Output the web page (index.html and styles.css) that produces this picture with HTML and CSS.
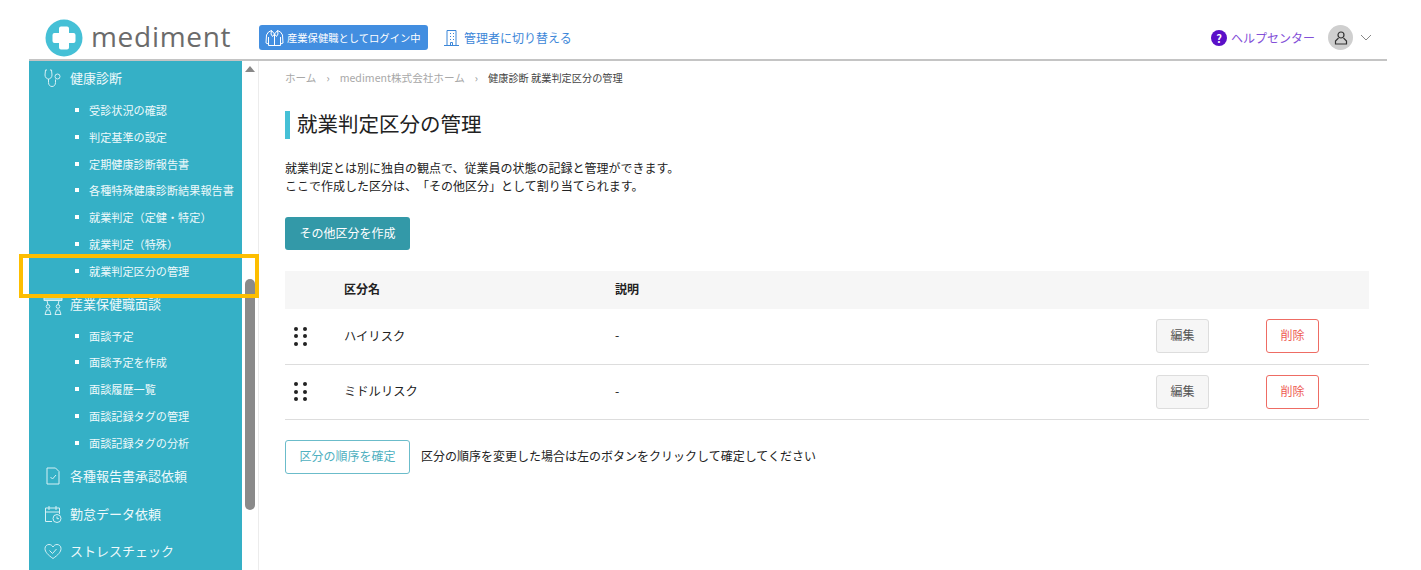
FILE: index.html
```html
<!DOCTYPE html>
<html lang="ja">
<head>
<meta charset="utf-8">
<title>就業判定区分の管理</title>
<link rel="stylesheet" href="styles.css">
</head>
<body>
<div class="app">
  <header class="topbar">
    <div class="logo">
      <svg class="logo-mark" width="38" height="38" viewBox="0 0 38 38"><circle cx="19" cy="19" r="18.5" fill="#45c0d6"/><path d="M16 7.500h6a2 2 0 0 1 2 2V14h4.500a2 2 0 0 1 2 2v6a2 2 0 0 1-2 2H24v4.500a2 2 0 0 1-2 2h-6a2 2 0 0 1-2-2V24H9.500a2 2 0 0 1-2-2v-6a2 2 0 0 1 2-2H14V9.500a2 2 0 0 1 2-2z" fill="#fff"/></svg>
      <span class="logo-text">mediment</span>
    </div>
    <div class="role-badge">
      <svg width="19" height="18" viewBox="0 0 19 18" fill="none" stroke="#fff" stroke-width="1"><path d="M6.500 1.500 3.500 3 1.500 6 1 14l2.500 1M12.500 1.500l3 1.500 2 3 .5 8-2.500 1M3.500 8v8.500h12V8M6.500 1.500l3 3.500 3-3.500M6.500 1.500 6 5l1.500 2.500L9.500 5l2 2.500L13 5l-.5-3.500M9.500 5v11.500"/></svg>
      <span>産業保健職としてログイン中</span>
    </div>
    <a class="switch-link">
      <svg width="15" height="18" viewBox="0 0 15 18" fill="none" stroke="#3b86d8" stroke-width="1"><path d="M3 1.500h9v15H3zM0 16.500h15M6 4.500h1M9 4.500h1M6 7.500h1M9 7.500h1M6 10.500h1M9 10.500h1M6.500 13.500h2v3h-2z"/></svg>
      <span>管理者に切り替える</span>
    </a>
    <div class="top-right">
      <a class="help"><span class="help-icon">?</span><span>ヘルプセンター</span></a>
      <span class="avatar">
        <svg width="14" height="14" viewBox="0 0 14 14" fill="none" stroke="#333" stroke-width="1.200"><circle cx="7" cy="4" r="3"/><path d="M4.500 7 1.500 10v3h11v-3l-3-3"/></svg>
      </span>
      <svg class="chev" width="12" height="7" viewBox="0 0 12 7" fill="none" stroke="#888" stroke-width="1"><path d="M1 1l5 5 5-5"/></svg>
    </div>
  </header>

  <div class="body-row">
    <nav class="sidebar">
      <div class="nav-head first">
        <svg width="20" height="20" viewBox="0 0 20 20" fill="none" stroke="#d6f0f5" stroke-width="1"><path d="M4 2H2.500L2 7c0 2.500 2 4 3.500 4S9 9.500 9 7L8.500 2H7M5.500 11v3.500c0 2.500 1.500 4 3.500 4s3.500-1.500 3.500-4v-3"/><circle cx="14.500" cy="8.500" r="2.500"/></svg>
        <span>健康診断</span>
      </div>
      <ul class="nav-list">
        <li>受診状況の確認</li>
        <li>判定基準の設定</li>
        <li>定期健康診断報告書</li>
        <li>各種特殊健康診断結果報告書</li>
        <li>就業判定（定健・特定）</li>
        <li>就業判定（特殊）</li>
        <li>就業判定区分の管理</li>
      </ul>
      <div class="nav-head second">
        <svg class="icon-desk" width="20" height="20" viewBox="0 0 20 20" fill="none" stroke="#d6f0f5" stroke-width="1"><path d="M1 1.500h18v3H1zM4 4.500 5 9M16 4.500 15 9" fill="#9bdbe6" stroke="#d6f0f5"/><circle cx="5" cy="10.500" r="1.800"/><circle cx="15" cy="10.500" r="1.800"/><path d="M2 18.500 3.500 14h3L8 18.500zM12 18.500 13.500 14h3l1.500 4.500z"/></svg>
        <span>産業保健職面談</span>
      </div>
      <ul class="nav-list">
        <li>面談予定</li>
        <li>面談予定を作成</li>
        <li>面談履歴一覧</li>
        <li>面談記録タグの管理</li>
        <li>面談記録タグの分析</li>
      </ul>
      <div class="nav-head third">
        <svg width="20" height="20" viewBox="0 0 20 20" fill="none" stroke="#d6f0f5" stroke-width="1"><path d="M4 2h8.500L16 5.500V18H4zM7.500 11l2 2 3.500-4"/></svg>
        <span>各種報告書承認依頼</span>
      </div>
      <div class="nav-head fourth">
        <svg width="20" height="20" viewBox="0 0 20 20" fill="none" stroke="#d6f0f5" stroke-width="1"><path d="M9 17.500H2.500V4h14v6M2.500 8h14M6 2v4M13 2v4"/><circle cx="14" cy="14.500" r="4"/><path d="M14 12.500v2.200h2"/></svg>
        <span>勤怠データ依頼</span>
      </div>
      <div class="nav-head fifth">
        <svg width="20" height="20" viewBox="0 0 20 20" fill="none" stroke="#d6f0f5" stroke-width="1"><path d="M10 17.500C5 14 2 11 2 7.500 2 5 4 3.500 6 3.500c1.800 0 3.200 1 4 2.500.8-1.500 2.200-2.500 4-2.500 2 0 4 1.500 4 4 0 3.500-3 6.500-8 10zM6.500 9.500l3 3 4-4.500"/></svg>
        <span>ストレスチェック</span>
      </div>
    </nav>
    <div class="scrollbar">
      <span class="scroll-arrow"></span>
      <span class="scroll-thumb"></span>
    </div>

    <main class="content">
      <div class="crumbs">
        <span>ホーム</span><i>›</i><span>mediment株式会社ホーム</span><i>›</i><span class="current">健康診断 就業判定区分の管理</span>
      </div>
      <h1 class="title">就業判定区分の管理</h1>
      <p class="lead">就業判定とは別に独自の観点で、従業員の状態の記録と管理ができます。<br>ここで作成した区分は、「その他区分」として割り当てられます。</p>
      <button class="btn-create">その他区分を作成</button>

      <div class="table">
        <div class="row head">
          <div class="c-name">区分名</div>
          <div class="c-desc">説明</div>
        </div>
        <div class="row item">
          <div class="c-grip"><span></span><span></span><span></span><span></span><span></span><span></span></div>
          <div class="c-name">ハイリスク</div>
          <div class="c-desc">-</div>
          <button class="btn-edit">編集</button>
          <button class="btn-del">削除</button>
        </div>
        <div class="row item">
          <div class="c-grip"><span></span><span></span><span></span><span></span><span></span><span></span></div>
          <div class="c-name">ミドルリスク</div>
          <div class="c-desc">-</div>
          <button class="btn-edit">編集</button>
          <button class="btn-del">削除</button>
        </div>
      </div>

      <div class="confirm">
        <button class="btn-confirm">区分の順序を確定</button>
        <span class="confirm-note">区分の順序を変更した場合は左のボタンをクリックして確定してください</span>
      </div>
    </main>
  </div>
  <div class="highlight"></div>
</div>
</body>
</html>
```
FILE: styles.css
```css
* { box-sizing: border-box; }
html, body { margin: 0; padding: 0; height: 100%; overflow: hidden; background: #fff; }
body { font-family: "Noto Sans CJK JP", "Noto Sans", sans-serif; color: #222; text-spacing-trim: space-all; }
.app { position: relative; margin-left: 29px; width: 1358px; height: 570px; display: flex; flex-direction: column; }

.topbar { height: 61px; flex: none; display: flex; align-items: center; padding-top: 16px; position: relative; z-index: 2; border-bottom: 2px solid #c4c4c4; background: #fff; }
.logo { display: flex; align-items: center; margin-left: 16px; width: 214px; gap: 8px; }
.logo-mark { flex: none; }
.logo-text { font-family: "Open Sans", sans-serif; font-size: 28px; line-height: 30px; letter-spacing: .7px; color: #6b6b6b; padding-bottom: 3px; }
.role-badge { display: flex; align-items: center; gap: 3px; height: 25px; width: 169px; padding-left: 6px; background: #428ee0; border-radius: 3px; color: #fff; font-size: 10.300px; white-space: nowrap; }
.switch-link { display: flex; align-items: center; gap: 5px; margin-left: 16px; color: #3b86d8; font-size: 12px; white-space: nowrap; }
.top-right { margin-left: auto; display: flex; align-items: center; padding-right: 15px; }
.help { display: flex; align-items: center; gap: 4px; color: #8350d8; font-size: 12px; }
.help-icon { width: 16px; height: 16px; border-radius: 50%; background: #5a10c8; color: #fff; font-size: 11px; font-weight: 700; line-height: 16px; text-align: center; }
.avatar { width: 25px; height: 25px; border-radius: 50%; background: #cfcfcf; margin-left: 13px; display: flex; align-items: center; justify-content: center; }
.chev { margin-left: 7px; }

.body-row { flex: 1; min-height: 0; display: flex; }
.sidebar { width: 213px; flex: none; background: #35b0c6; color: #eef9fb; overflow: hidden; }
.nav-head { display: flex; align-items: center; gap: 7px; padding-left: 14px; height: 20px; font-size: 13px; line-height: 20px; white-space: nowrap; }
.nav-head svg { flex: none; }
.icon-desk { margin-top: 4px; }
.nav-head.first { margin-top: 7px; }
.nav-head.second { margin-top: 9px; }
.nav-head.third { margin-top: 9px; }
.nav-head.fourth { margin-top: 18px; }
.nav-head.fifth { margin-top: 17px; }
.nav-list { list-style: none; margin: 9px 0 0; padding: 0 0 0 60px; }
.nav-list li { height: 26.800px; line-height: 26.800px; font-size: 11.150px; white-space: nowrap; position: relative; }
.nav-list li::before { content: ""; position: absolute; left: -14px; top: 11px; width: 4px; height: 4px; background: #fff; }

.scrollbar { width: 16px; flex: none; background: #fff; position: relative; }
.scroll-arrow { position: absolute; left: 3px; top: 5px; width: 0; height: 0; border-left: 5px solid transparent; border-right: 5px solid transparent; border-bottom: 6px solid #888; }
.scroll-thumb { position: absolute; left: 3px; top: 218px; width: 10px; height: 231px; background: #8a8a8a; border-radius: 5px; }

.content { flex: 1; min-width: 0; border-left: 1px solid #ececec; padding: 0 18px 0 26px; }
.crumbs { display: flex; align-items: center; height: 18px; margin-top: 7px; font-size: 10.600px; color: #a8a8a8; white-space: nowrap; }
.crumbs i { font-style: normal; margin: 0 10px; color: #999; }
.crumbs .current { color: #444; font-size: 10.200px; }
.title { margin: 25px 0 0; height: 28px; border-left: 5px solid #45c0d6; padding-left: 7px; font-size: 20.500px; line-height: 25px; font-weight: 400; color: #222; }
.lead { margin: 20px 0 0; font-size: 12px; line-height: 18px; color: #222; }
.btn-create { display: block; margin-top: 22px; width: 125px; height: 33px; border: 0; border-radius: 3px; padding: 0 0 3px; background: #3399a8; color: #fff; font: inherit; font-size: 12px; }

.table { margin-top: 21px; }
.row { display: flex; align-items: center; }
.row.head { height: 38px; padding-bottom: 3px; background: #f6f6f6; font-size: 12px; font-weight: 700; }
.row.item { height: 55.500px; border-bottom: 1px solid #ddd; font-size: 12.300px; }
.c-grip { width: 14px; margin-left: 9px; display: grid; grid-template-columns: 4px 4px; column-gap: 5px; row-gap: 3.500px; flex: none; }
.c-grip span { width: 4px; height: 4px; border-radius: 50%; background: #222; }
.head .c-name { margin-left: 59px; width: 271px; }
.item .c-name { margin-left: 36px; width: 271px; padding-bottom: 1px; }
.c-desc { width: 541px; flex: none; }
.item .c-desc { padding-bottom: 2px; }
.btn-edit, .btn-del { width: 53px; height: 34px; border-radius: 3px; font: inherit; font-size: 12px; padding: 0 0 3px; flex: none; }
.btn-edit { background: #f6f6f6; border: 1px solid #ddd; color: #555; }
.btn-del { margin-left: 57px; background: #fff; border: 1px solid #ee6c64; color: #ee5b52; }

.confirm { display: flex; align-items: center; gap: 11px; margin-top: 20px; font-size: 12px; color: #222; white-space: nowrap; }
.confirm-note { padding-bottom: 3px; }
.btn-confirm { width: 125px; height: 34px; padding: 0 0 3px; border: 1px solid #6bbcca; border-radius: 3px; background: #fff; color: #4fb0c0; font: inherit; font-size: 12px; }

.highlight { position: absolute; left: -10px; top: 254px; width: 240px; height: 44px; border: 4px solid #fdbe00; z-index: 3; }
```
